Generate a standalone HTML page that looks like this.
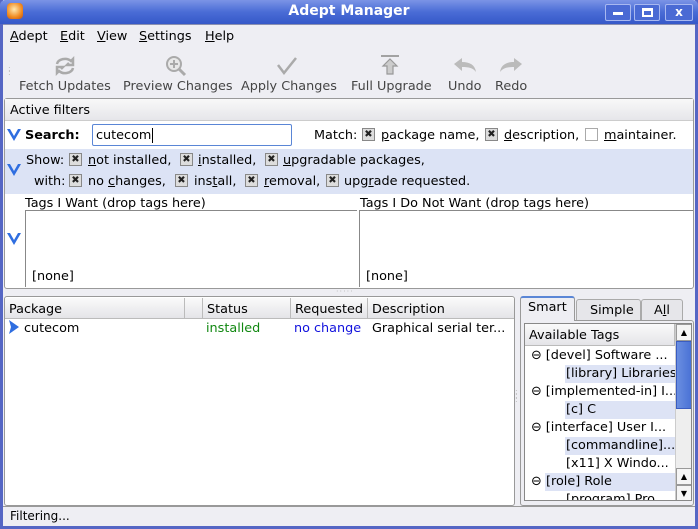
<!DOCTYPE html>
<html><head><meta charset="utf-8"><style>
*{box-sizing:border-box;margin:0;padding:0}
body{width:698px;height:529px;overflow:hidden;background:#eeeef3;font-family:"DejaVu Sans","Liberation Sans",sans-serif;font-size:12.8px;color:#000;position:relative}
.a{position:absolute;white-space:nowrap}
.u{text-decoration:underline}
.cb{position:absolute;width:13px;height:13px;border:1px solid #888;background:#ddd;font-size:10px;line-height:11px;text-align:center;color:#222}
.hdr{position:absolute;top:298px;height:21px;background:linear-gradient(#fafafa,#e4e4e8);border-right:1px solid #bbb;border-bottom:1px solid #bbb;padding:3px 4px;line-height:17px}
.tl{position:absolute;height:18px;line-height:18px;white-space:nowrap}
.sel{background:#dde3f5}
</style></head><body>
<!-- frame -->
<div class="a" style="left:0;top:0;width:698px;height:529px;border:3px solid #5566c4;border-top:none"></div>
<div class="a" style="left:0;top:0;width:698px;height:24px;background:linear-gradient(#7b94e6,#4a6cd6 50%,#3558c8);border-radius:5px 5px 0 0"></div>
<div class="a" style="left:7px;top:3px;width:16px;height:16px;border-radius:4px;background:radial-gradient(circle at 45% 40%,#ffe9b0,#f08a20 60%,#c05010)"></div>
<div class="a" style="left:0;top:3px;width:698px;text-align:center;color:#fff;font-weight:bold;font-size:14px">Adept Manager</div>
<div class="a" style="left:605px;top:4px;width:26px;height:17px;border:1px solid #a8b8f0;border-radius:2px;background:#4a6ad4"><div style="margin:7px auto 0;width:10px;height:3px;background:#fff"></div></div>
<div class="a" style="left:634px;top:4px;width:26px;height:17px;border:1px solid #a8b8f0;border-radius:2px;background:#4a6ad4"><div style="margin:3px auto 0;width:11px;height:9px;border:2px solid #fff;border-top-width:3px"></div></div>
<div class="a" style="left:665px;top:4px;width:28px;height:17px;border:1px solid #a8b8f0;border-radius:2px;background:#4a6ad4;color:#fff;font-weight:bold;text-align:center;font-size:12px;line-height:14px">x</div>
<div class="a" style="left:3px;top:24px;width:692px;height:1px;background:#8a8fb0"></div>
<!-- menu -->
<div class="a" style="left:10px;top:29px"><span class="u">A</span>dept</div>
<div class="a" style="left:60px;top:29px"><span class="u">E</span>dit</div>
<div class="a" style="left:97px;top:29px"><span class="u">V</span>iew</div>
<div class="a" style="left:139px;top:29px"><span class="u">S</span>ettings</div>
<div class="a" style="left:205px;top:29px"><span class="u">H</span>elp</div>
<!-- toolbar -->
<div class="a" style="left:8px;top:67px;color:#bbb;font-size:8px;line-height:4px">:<br>:</div>
<svg class="a" style="left:53px;top:54px" width="24" height="24" viewBox="0 0 24 24" fill="none" stroke="#aaa" stroke-width="2.5"><path d="M4 10a8 6 0 0 1 14-3l2-2v6h-6l2-2"/><path d="M20 14a8 6 0 0 1-14 3l-2 2v-6h6l-2 2"/></svg>
<div class="a" style="left:19px;top:79px;color:#444">Fetch Updates</div>
<svg class="a" style="left:164px;top:54px" width="24" height="24" viewBox="0 0 24 24" fill="none" stroke="#aaa" stroke-width="2"><circle cx="10" cy="10" r="7" fill="#e8e8e8"/><path d="M15 15l6 6" stroke-width="3"/><path d="M10 6v8M6 10h8"/></svg>
<div class="a" style="left:123px;top:79px;color:#444">Preview Changes</div>
<svg class="a" style="left:275px;top:55px" width="24" height="22" viewBox="0 0 24 22" fill="none" stroke="#aaa" stroke-width="2.5"><path d="M3 10l6 8L21 3"/></svg>
<div class="a" style="left:241px;top:79px;color:#444">Apply Changes</div>
<svg class="a" style="left:379px;top:55px" width="22" height="22" viewBox="0 0 22 22" fill="#ccc" stroke="#999" stroke-width="1.2"><path d="M2 1h18" stroke="#888" stroke-width="1.5"/><path d="M11 4l7 7h-4v8H8v-8H4z"/></svg>
<div class="a" style="left:351px;top:79px;color:#444">Full Upgrade</div>
<svg class="a" style="left:452px;top:56px" width="26" height="20" viewBox="0 0 26 20" fill="#bbb"><path d="M2 8l8-6v4c8 0 13 3 14 10-3-4-7-5-14-5v4z"/></svg>
<div class="a" style="left:448px;top:79px;color:#444">Undo</div>
<svg class="a" style="left:498px;top:56px" width="26" height="20" viewBox="0 0 26 20" fill="#bbb"><path d="M24 8l-8-6v4C8 6 3 9 2 16c3-4 7-5 14-5v4z"/></svg>
<div class="a" style="left:495px;top:79px;color:#444">Redo</div>
<!-- active filters panel -->
<div class="a" style="left:4px;top:98px;width:690px;height:191px;border:1px solid #999;border-radius:3px;background:#fff"></div>
<div class="a" style="left:5px;top:99px;width:688px;height:22px;background:linear-gradient(#f8f8f8,#e6e6ea);border-bottom:1px solid #ccc;padding:4px 5px">Active filters</div>
<svg class="a" style="left:7px;top:128px" width="14" height="14" viewBox="0 0 14 14" fill="#2f6ee0"><path d="M0 1l7 12 7-12-3 0-4 7-4-7z"/></svg>
<div class="a" style="left:25px;top:128px;font-weight:bold">Search:</div>
<div class="a" style="left:92px;top:124px;width:200px;height:22px;border:1px solid #5a86d6;border-radius:2px;background:#fff;padding:3px 3px">cutecom<span style="border-left:1px solid #000;margin-left:1px"></span></div>
<div class="a" style="left:314px;top:128px">Match:</div>
<div class="cb" style="left:362px;top:128px">✖</div><div class="a" style="left:381px;top:128px"><span class="u">p</span>ackage name,</div>
<div class="cb" style="left:485px;top:128px">✖</div><div class="a" style="left:504px;top:128px"><span class="u">d</span>escription,</div>
<div class="cb" style="left:585px;top:128px;background:#fff;border-color:#aaa"></div><div class="a" style="left:604px;top:128px"><span class="u">m</span>aintainer.</div>
<div class="a" style="left:5px;top:149px;width:688px;height:45px;background:#dce3f5"></div>
<svg class="a" style="left:7px;top:163px" width="14" height="14" viewBox="0 0 14 14" fill="#2f6ee0"><path d="M0 1l7 12 7-12-3 0-4 7-4-7z"/></svg>
<div class="a" style="left:26px;top:153px">Show:</div>
<div class="cb" style="left:69px;top:153px">✖</div><div class="a" style="left:88px;top:153px"><span class="u">n</span>ot installed,</div>
<div class="cb" style="left:180px;top:153px">✖</div><div class="a" style="left:198px;top:153px"><span class="u">i</span>nstalled,</div>
<div class="cb" style="left:265px;top:153px">✖</div><div class="a" style="left:283px;top:153px"><span class="u">u</span>pgradable packages,</div>
<div class="a" style="left:34px;top:174px">with:</div>
<div class="cb" style="left:69px;top:174px">✖</div><div class="a" style="left:88px;top:174px">no <span class="u">c</span>hanges,</div>
<div class="cb" style="left:175px;top:174px">✖</div><div class="a" style="left:194px;top:174px">ins<span class="u">t</span>all,</div>
<div class="cb" style="left:245px;top:174px">✖</div><div class="a" style="left:264px;top:174px"><span class="u">r</span>emoval,</div>
<div class="cb" style="left:326px;top:174px">✖</div><div class="a" style="left:344px;top:174px">upg<span class="u">r</span>ade requested.</div>
<div class="a" style="left:25px;top:196px">Tags I Want (drop tags here)</div>
<div class="a" style="left:360px;top:196px">Tags I Do Not Want (drop tags here)</div>
<div class="a" style="left:25px;top:210px;width:332px;height:77px;border-left:1px solid #888;border-top:1px solid #888"></div>
<div class="a" style="left:359px;top:210px;width:334px;height:77px;border-left:1px solid #888;border-top:1px solid #888"></div>
<div class="a" style="left:32px;top:269px">[none]</div>
<div class="a" style="left:366px;top:269px">[none]</div>
<svg class="a" style="left:7px;top:232px" width="14" height="14" viewBox="0 0 14 14" fill="#2f6ee0"><path d="M0 1l7 12 7-12-3 0-4 7-4-7z"/></svg>
<div class="a" style="left:336px;top:287px;color:#bbb;font-size:8px;letter-spacing:1px">·····</div>
<!-- package list -->
<div class="a" style="left:4px;top:296px;width:511px;height:210px;border:1px solid #999;border-radius:3px;background:#fff"></div>
<div class="hdr" style="left:5px;width:180px">Package</div>
<div class="hdr" style="left:185px;width:18px"></div>
<div class="hdr" style="left:203px;width:88px">Status</div>
<div class="hdr" style="left:291px;width:77px">Requested</div>
<div class="hdr" style="left:368px;width:146px;border-right:none">Description</div>
<svg class="a" style="left:8px;top:320px" width="12" height="14" viewBox="0 0 12 14" fill="#2f6ee0"><path d="M1 0l10 7-10 7 2-7z"/></svg>
<div class="a" style="left:24px;top:321px">cutecom</div>
<div class="a" style="left:206px;top:321px;color:#118811">installed</div>
<div class="a" style="left:294px;top:321px;color:#1111dd">no change</div>
<div class="a" style="left:372px;top:321px">Graphical serial ter...</div>
<div class="a" style="left:515px;top:390px;color:#bbb;font-size:8px;line-height:4px">:<br>:<br>:</div>
<!-- right tabs -->
<div class="a" style="left:520px;top:296px;width:55px;height:25px;border:1px solid #999;border-top:2px solid #5a86d6;border-bottom:none;border-radius:3px 3px 0 0;background:#eeeef3;padding:2px 7px;z-index:2">Smart</div>
<div class="a" style="left:576px;top:299px;width:65px;height:22px;border:1px solid #aaa;border-radius:3px 3px 0 0;background:#e6e6ea;padding:3px 13px">Simple</div>
<div class="a" style="left:641px;top:299px;width:42px;height:22px;border:1px solid #aaa;border-radius:3px 3px 0 0;background:#e6e6ea;padding:3px 12px">A<span class="u">l</span>l</div>
<div class="a" style="left:520px;top:320px;width:174px;height:186px;border:1px solid #999;border-radius:0 3px 3px 3px"></div>
<div class="a" style="left:524px;top:323px;width:168px;height:178px;border:1px solid #888;background:#fff;overflow:hidden">
 <div class="a" style="left:0;top:0;width:150px;height:22px;background:linear-gradient(#fafafa,#e4e4e8);border-bottom:1px solid #bbb;border-right:1px solid #bbb;padding:4px 4px">Available Tags</div>
 <div class="tl" style="left:6px;top:23px">⊖ [devel] Software ...</div>
 <div class="tl sel" style="left:40px;top:41px;width:110px;padding-left:1px">[library] Libraries</div>
 <div class="tl" style="left:6px;top:59px">⊖ [implemented-in] I...</div>
 <div class="tl sel" style="left:40px;top:77px;width:110px;padding-left:1px">[c] C</div>
 <div class="tl" style="left:6px;top:95px">⊖ [interface] User I...</div>
 <div class="tl sel" style="left:40px;top:113px;width:110px;padding-left:1px">[commandline]...</div>
 <div class="tl" style="left:40px;top:131px;padding-left:1px">[x11] X Windo...</div>
 <div class="tl sel" style="left:20px;top:149px;width:130px;padding-left:1px">[role] Role</div>
 <div class="tl" style="left:6px;top:149px">⊖</div>
 <div class="tl" style="left:40px;top:167px;padding-left:1px">[program] Pro...</div>
 <div class="a" style="left:150px;top:0;width:17px;height:178px;background:#eee;border-left:1px solid #ccc"></div>
 <div class="a" style="left:151px;top:0;width:16px;height:17px;border:1px solid #999;background:#f5f5f5;font-size:8px;text-align:center;line-height:15px">▲</div>
 <div class="a" style="left:151px;top:17px;width:16px;height:68px;border:1px solid #3a5cc0;background:linear-gradient(90deg,#6a8ee0,#4a72d6)"></div>
 <div class="a" style="left:151px;top:144px;width:16px;height:17px;border:1px solid #999;background:#f5f5f5;font-size:8px;text-align:center;line-height:15px">▲</div>
 <div class="a" style="left:151px;top:161px;width:16px;height:17px;border:1px solid #999;background:#f5f5f5;font-size:8px;text-align:center;line-height:15px">▼</div>
</div>
<!-- status -->
<div class="a" style="left:3px;top:506px;width:692px;height:1px;background:#999"></div>
<div class="a" style="left:10px;top:509px;font-size:12px">Filtering...</div>
</body></html>
